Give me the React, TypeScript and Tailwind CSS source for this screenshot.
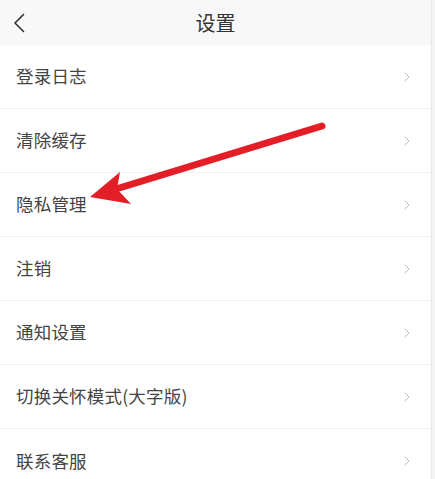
import { ChevronRight } from 'lucide-react';

const items = ['登录日志', '清除缓存', '隐私管理', '注销', '通知设置', '切换关怀模式(大字版)', '联系客服'];

const font = { fontFamily: '"Noto Sans CJK SC", "Noto Sans", sans-serif' };

export default function App() {
  return (
    <div className="relative w-[435px] h-[479px] overflow-hidden bg-white flex" style={font}>
      <div className="flex-1 flex flex-col min-w-0">
        <div className="h-[45px] shrink-0 bg-[#f8f8f8] flex items-center relative">
          <svg width="12" height="20" viewBox="0 0 12 20" className="ml-[13px]" fill="none">
            <path d="M10.5 1.5 L2 10 L10.5 18.5" stroke="#333" strokeWidth="1.6" strokeLinecap="round" strokeLinejoin="round" />
          </svg>
          <div className="absolute inset-0 flex items-center justify-center text-[20px] text-[#333]">设置</div>
        </div>
        {items.map((label, i) => (
          <div key={label} className={`h-[64px] shrink-0 flex items-center justify-between pl-[16px] pr-[16px] ${i < items.length - 1 ? 'border-b border-[#f3f3f3]' : ''}`}>
            <span className="text-[17.5px] text-[#444] tracking-[0.2px]">{label}</span>
            <ChevronRight size={16} strokeWidth={1.4} className="text-[#b8b8b8]" />
          </div>
        ))}
      </div>
      <div className="w-[4px] shrink-0 bg-[#f4f4f4] border-l border-[#e8e8e8]" />

      <svg className="absolute inset-0 pointer-events-none" width="435" height="479" viewBox="0 0 435 479">
        <line x1="322" y1="126" x2="116" y2="189" stroke="#e41e26" strokeWidth="7" strokeLinecap="round" />
        <polygon points="90,197 120,172 117,189 131,204" fill="#e41e26" />
      </svg>
    </div>
  );
}
